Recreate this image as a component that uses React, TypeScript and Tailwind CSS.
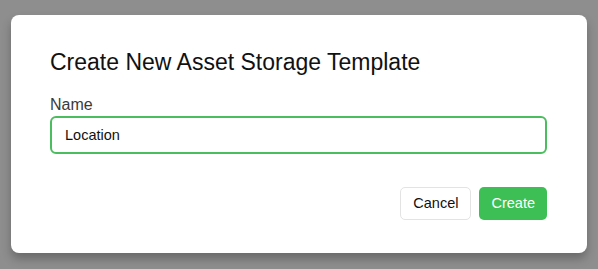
import React from 'react';

function App() {
  return (
    <div className="w-[598px] h-[269px] bg-[#8e8e8e] pt-[15px] pl-[11px] overflow-hidden" style={{ fontFamily: '"Liberation Sans", Arial, sans-serif' }}>
      <div className="w-[576px] h-[238px] bg-white rounded-[8px] shadow-[0_6px_10px_rgba(0,0,0,0.25)] px-[39px] pt-[34px]">
        <h2 className="text-[23px] leading-[27px] text-[#111]">Create New Asset Storage Template</h2>
        <label className="block mt-[19px] text-[16px] leading-[19px] font-medium text-[#3a3a3a]">Name</label>
        <input
          className="mt-[2px] w-[497px] h-[38px] rounded-[6px] border-2 border-[#4cbd5e] px-[13px] text-[14.5px] text-[#111] outline-none"
          defaultValue="Location"
        />
        <div className="flex justify-end gap-[8px] mt-[33px] w-[497px]">
          <button className="h-[33px] px-[12px] rounded-[5px] border border-[#e3e3e3] bg-white text-[14.5px] text-[#111]">Cancel</button>
          <button className="h-[33px] px-[12px] rounded-[5px] bg-[#3dbf55] text-[14.5px] text-white font-medium">Create</button>
        </div>
      </div>
    </div>
  );
}

export default App;
